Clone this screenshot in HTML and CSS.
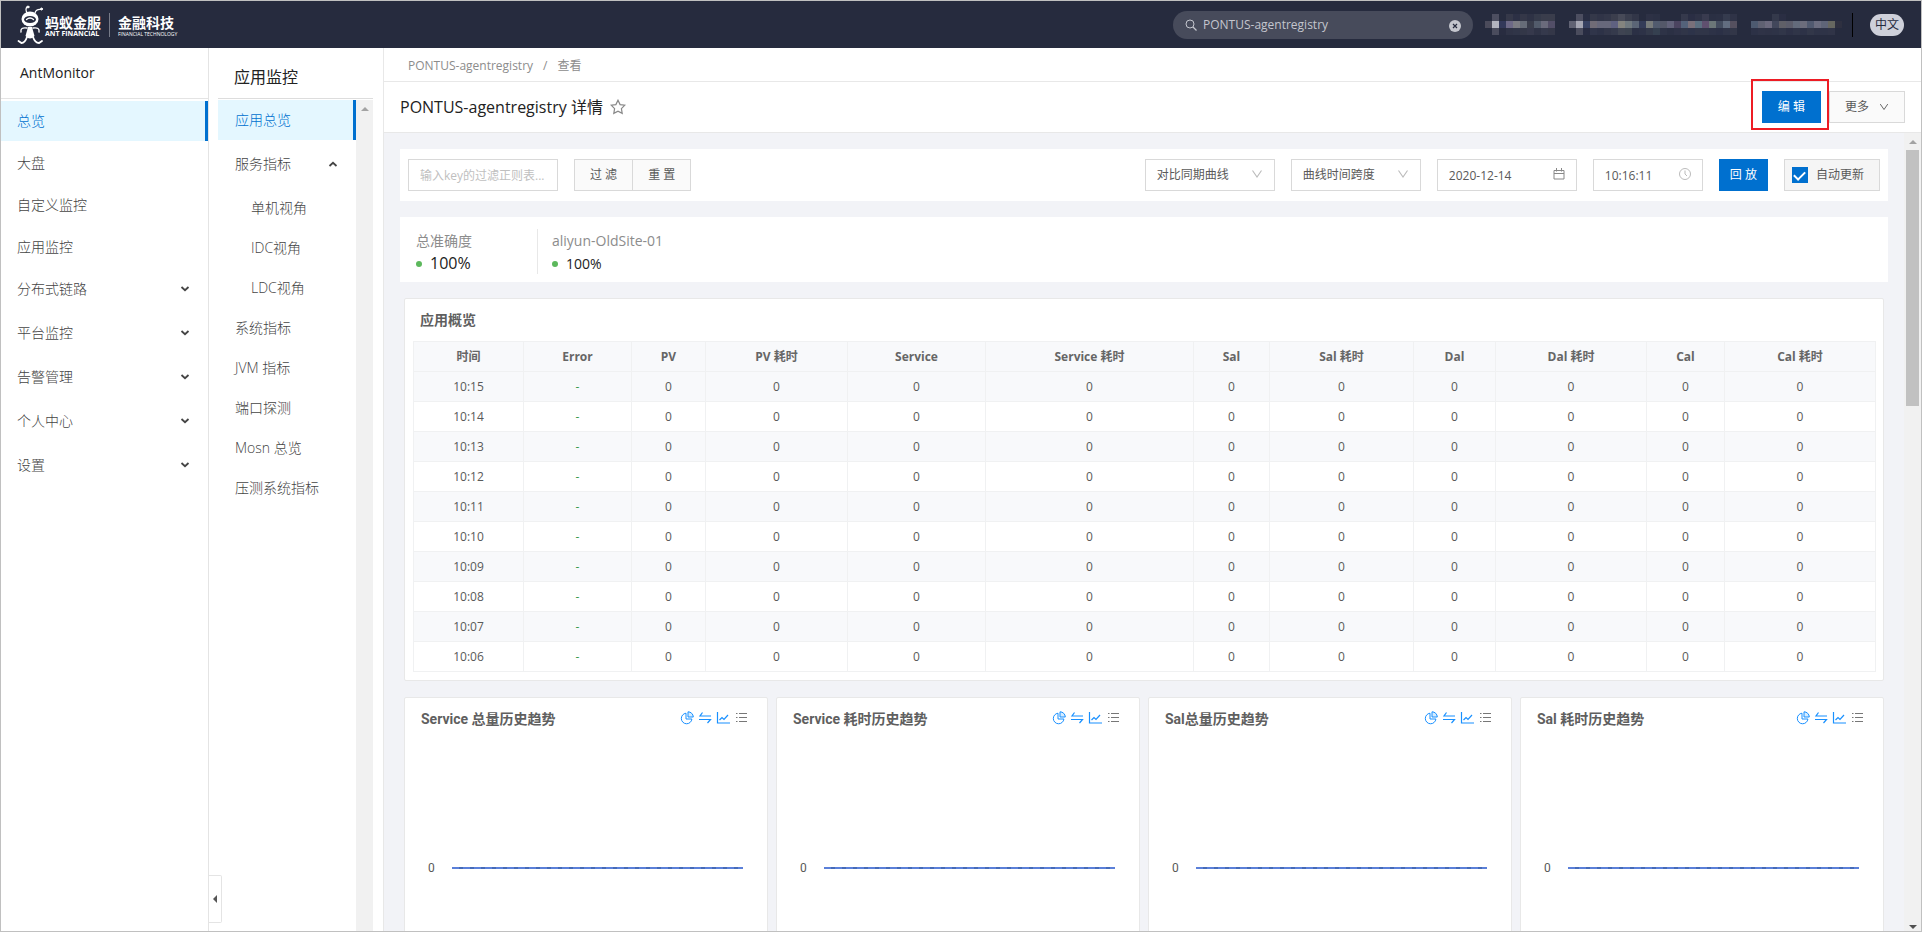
FILE: index.html
```html
<!DOCTYPE html>
<html lang="zh-CN">
<head>
<meta charset="UTF-8" />
<meta name="viewport" content="width=device-width, initial-scale=1" />
<title>AntMonitor</title>
<link rel="stylesheet" href="styles.css">
</head>
<body>

<svg class="sprite" aria-hidden="true">
  <symbol id="chevron" viewBox="0 0 12 12"><path d="M2.5 4 6 7.2 9.5 4" fill="none" stroke="currentColor" stroke-width="1.8"/></symbol>
  <symbol id="down" viewBox="0 0 12 12"><path d="M1.5 2.5 6 9 10.5 2.5" fill="none" stroke="currentColor" stroke-width="1.1"/></symbol>
  <symbol id="pie" viewBox="0 0 14 14"><g fill="none" stroke="currentColor"><path d="M6 2.2A5.3 5.3 0 1 0 11.9 8H6z"/><path d="M8 .8V6h5.3A5.3 5.3 0 0 0 8 .8z" fill="#d6ecff"/></g></symbol>
  <symbol id="swap" viewBox="0 0 14 14"><path d="M4.5 1.5 2 5h11M1 8.500h11.500L9.500 12" fill="none" stroke="currentColor" stroke-width="1.2"/></symbol>
  <symbol id="line" viewBox="0 0 14 14"><path d="M1.5 1v11H14M3.5 9 6 6.500l2 2 4-4.500" fill="none" stroke="currentColor" stroke-width="1.2"/></symbol>
  <symbol id="list" viewBox="0 0 14 14"><path d="M2 2.500h1.500M5 2.500h8M2 6.500h1.500M5 6.500h8M2 10.500h1.500M5 10.500h8" fill="none" stroke="currentColor" stroke-width="1.200"/></symbol>
</svg>

<header class="topbar">
  <a class="logo" href="#" aria-label="蚂蚁金服 金融科技">
    <svg class="ant" viewBox="0 0 28 40" fill="none" stroke="#fff" stroke-linecap="round">
      <path d="M10 8Q8 4 10 2M18 8Q19 4 24 4.5" stroke-width="1.2"/>
      <circle cx="11" cy="2" r="1" fill="#fff"/><circle cx="24.5" cy="4" r="1" fill="#fff"/>
      <ellipse cx="13" cy="14" rx="8.5" ry="7.5" fill="#fff" stroke="none"/>
      <ellipse cx="13" cy="14.5" rx="6" ry="3.5" fill="#262b3e" stroke="none"/>
      <path d="M9.5 14.5Q13 11.5 16.5 14.5" stroke-width="1.3"/>
      <path d="M10 23Q3 22 4 27M16 23Q23 22 22 27" stroke-width="1.4"/>
      <path d="M11 22h4l2.500 9q-4.500 5-9 0z" fill="#fff" stroke="none"/>
      <path d="M10 32Q8 38 4.500 38L1.500 36M16 32Q18 38 22 38L25 36" stroke-width="1.8"/>
    </svg>
    <span class="brand"><b>蚂蚁金服</b><small>ANT FINANCIAL</small></span>
    <span class="brand brand-sub"><b>金融科技</b><small>FINANCIAL TECHNOLOGY</small></span>
  </a>
  <div class="search">
    <svg viewBox="0 0 12 12"><path d="M8 8l3.5 3.5" stroke="currentColor" stroke-width="1.2"/><circle cx="5" cy="5" r="4" fill="none" stroke="currentColor"/></svg>
    <input type="text" value="PONTUS-agentregistry" aria-label="搜索">
    <button class="search-clear" aria-label="清除"><svg viewBox="0 0 12 12"><circle cx="6" cy="6" r="6" fill="currentColor"/><path d="M4 4l4 4M8 4l-4 4" stroke="#262b3e" stroke-width="1.2"/></svg></button>
  </div>
  <svg class="masked" id="masked" viewBox="0 0 357 21" aria-hidden="true"></svg>
  <button class="lang">中文</button>
</header>

<div class="layout">
  <aside class="sidebar">
    <h1>AntMonitor</h1>
    <nav class="menu">
      <a class="active" href="#">总览</a>
      <a href="#">大盘</a>
      <a href="#">自定义监控</a>
      <a href="#">应用监控</a>
      <a class="group" href="#">分布式链路<svg><use href="#chevron"/></svg></a>
      <a class="group" href="#">平台监控<svg><use href="#chevron"/></svg></a>
      <a class="group" href="#">告警管理<svg><use href="#chevron"/></svg></a>
      <a class="group" href="#">个人中心<svg><use href="#chevron"/></svg></a>
      <a class="group" href="#">设置<svg><use href="#chevron"/></svg></a>
    </nav>
  </aside>

  <aside class="subbar">
    <h2>应用监控</h2>
    <div class="subscroll">
      <nav class="submenu">
        <a class="active" href="#">应用总览</a>
        <a class="group open" href="#">服务指标<svg><use href="#chevron"/></svg></a>
        <a class="child" href="#">单机视角</a>
        <a class="child" href="#">IDC视角</a>
        <a class="child" href="#">LDC视角</a>
        <a href="#">系统指标</a>
        <a href="#">JVM 指标</a>
        <a href="#">端口探测</a>
        <a href="#">Mosn 总览</a>
        <a href="#">压测系统指标</a>
      </nav>
      <div class="track"><i class="arrow-up"></i></div>
    </div>
    <button class="collapse" aria-label="收起"><i></i></button>
  </aside>

  <main class="main">
    <nav class="breadcrumb"><a href="#">PONTUS-agentregistry</a><span>/</span><a href="#">查看</a></nav>
    <div class="titlebar">
      <h2>PONTUS-agentregistry 详情</h2>
      <svg class="star" viewBox="0 0 16 16"><path d="M8 1.2l2.1 4.4 4.700.6-3.400 3.400.8 4.800L8 12.100l-4.200 2.300.8-4.800L1.200 6.200l4.700-.6z" fill="none" stroke="currentColor" stroke-width="1.2"/></svg>
      <div class="actions">
        <span class="highlight"><button class="btn primary">编 辑</button></span>
        <button class="btn more">更多<svg><use href="#down"/></svg></button>
      </div>
    </div>

    <div class="body">
      <div class="content">
        <div class="toolbar">
          <input class="field filter" type="text" placeholder="输入key的过滤正则表..." aria-label="过滤">
          <div class="btn-group"><button class="btn">过 滤</button><button class="btn">重 置</button></div>
          <div class="control first">
            <select class="field" aria-label="对比同期曲线"><option>对比同期曲线</option></select>
            <svg><use href="#down"/></svg>
          </div>
          <div class="control">
            <select class="field" aria-label="曲线时间跨度"><option>曲线时间跨度</option></select>
            <svg><use href="#down"/></svg>
          </div>
          <div class="control date">
            <input class="field" type="text" value="2020-12-14" aria-label="日期">
            <svg viewBox="0 0 12 12"><path d="M1 2.5h10v8.500H1zM1 5.5h10M3.5 0v3.500M8.500 0v3.500" fill="none" stroke="#888"/></svg>
          </div>
          <div class="control time">
            <input class="field" type="text" value="10:16:11" aria-label="时间">
            <svg viewBox="0 0 12 12"><circle cx="6" cy="6" r="5.5" fill="none" stroke="currentColor"/><path d="M6 2.5V6l2 2" fill="none" stroke="currentColor"/></svg>
          </div>
          <button class="btn primary play">回 放</button>
          <label class="auto"><input type="checkbox" checked>自动更新</label>
        </div>

        <div class="accuracy">
          <div class="stat total"><span>总准确度</span><strong>100%</strong></div>
          <div class="stat"><span>aliyun-OldSite-01</span><strong>100%</strong></div>
        </div>

        <section class="panel">
          <h3>应用概览</h3>
          <table>
            <colgroup>
              <col class="w110"><col class="w108"><col class="w74"><col class="w142"><col class="w138"><col class="w208">
              <col class="w76"><col class="w144"><col class="w82"><col class="w151"><col class="w78"><col class="w151">
            </colgroup>
            <thead>
              <tr><th>时间</th><th>Error</th><th>PV</th><th>PV 耗时</th><th>Service</th><th>Service 耗时</th><th>Sal</th><th>Sal 耗时</th><th>Dal</th><th>Dal 耗时</th><th>Cal</th><th>Cal 耗时</th></tr>
            </thead>
            <tbody id="rows"></tbody>
          </table>
        </section>

        <div class="charts" id="charts"></div>
      </div>
      <div class="track"><i class="arrow-up"></i><div class="thumb"></div><i class="arrow-down"></i></div>
    </div>
  </main>
</div>

<script>
  // overview table, newest minute first
  const rows = document.getElementById('rows');
  for (let m = 15; m >= 6; m--) {
    const time = '10:' + String(m).padStart(2, '0');
    rows.innerHTML += '<tr><td>' + time + '</td><td class="ok">-</td>' + '<td>0</td>'.repeat(10) + '</tr>';
  }

  const charts = document.getElementById('charts');
  ['Service 总量历史趋势', 'Service 耗时历史趋势', 'Sal总量历史趋势', 'Sal 耗时历史趋势'].forEach(title => {
    const tools = ['pie', 'swap', 'line', 'list'].map(id =>
      `<button class="${id}" aria-label="${id}"><svg><use href="#${id}"/></svg></button>`).join('');
    charts.innerHTML += `
      <section class="chart">
        <header><h3>${title}</h3><div class="tools">${tools}</div></header>
        <div class="plot"><span>0</span><div class="series"></div></div>
      </section>`;
  });

  // account names are masked with 7px blocks: [first column, colours] per run
  const masks = [
    [[3, '353849 2c3045 343748 2e3245 353a4a 3a3d4c 3a3d4c'], [1, '4c4e60'],
     [13, '4c4e60 282d42 343849 303447 333749 3b3e4d 474a58 3a3e4e 323648'], [23, '2d3145 2b3044'],
     [28, '35394c 2a2e44 2e3246 393b4f 2a2f43 2b3044 353b4e 2f3347'], [41, '34394b 2a2e43']],
    [[0, '4b4b5b b3b4bf 33395a 6d6987 7b7c84 666c78 393d4c 525b6b 6a6b7c 524e67'],
     [12, '606273 a4a5b2 384262 706c77 67687b 67687b 5f6180 84847f 70797f 5b6576 343c58 777b7b 515b6e 545869 62627a 4b4460 54627a 79707a 5c6f80 60506f 6b7678 434c5f 626d80 55505f'],
     [38, '4d5a70 5f6172 6b697d 42475b 606068 5c5d6b 636b7b 6c6d7c 515a70 6b6d80 5f6578 666760 2e3040']],
    [[1, '4a4c5d 282c40 2f3346 303548 333748 36394c 2f3346 35394c 343748'],
     [13, '4a4c5d 282c42 30354a 2d3247 323649 353a4c 3f4452 3c4350 2b3045 2d3247 33394a 354050 2e3347 2b3044 2e3247 303548 2d3349 303548 303548 2d3247 2b3046 2f3448 323648'],
     [38, '2c3146 2f3347 2e3246 2e3347 313649 2d3146 303548 2d3247 323749 2e3347 2e3347 303447']]
  ];
  let cells = '';
  masks.forEach((runs, y) => runs.forEach(([start, colors]) => {
    colors.split(' ').forEach((c, i) => {
      cells += `<rect x="${(start + i) * 7}" y="${y * 7}" width="7" height="7" fill="#${c}"/>`;
    });
  }));
  document.getElementById('masked').innerHTML = cells;
</script>

</body>
</html>
```
FILE: styles.css
```css
* {
  box-sizing: border-box;
}
body {
  display: flex;
  flex-direction: column;
  height: 100vh;
  margin: 0;
  overflow: hidden;
  border: 1px solid #c0c0c0;
  font-family: "Open Sans", "Noto Sans CJK SC", sans-serif;
  font-size: 12px;
  line-height: 20px;
  color: #595959;
}
h1, h2, h3 {
  margin: 0;
  color: #222;
  font-weight: 400;
}
a {
  color: inherit;
  text-decoration: none;
}
button, input, select {
  margin: 0;
  padding: 0;
  font: inherit;
  color: inherit;
}
button {
  cursor: pointer;
}
svg {
  flex: none;
  width: 12px;
  height: 12px;
}
.sprite {
  display: none;
}

/* top bar */
.topbar {
  display: flex;
  flex: none;
  align-items: center;
  height: 47px;
  padding: 0 17px 0 16px;
  background: #262b3e;
}
.logo {
  display: flex;
  align-items: center;
  margin-right: auto;
  color: #fff;
}
.ant {
  width: 28px;
  height: 40px;
}
.brand {
  display: flex;
  flex-direction: column;
  padding-top: 2px;
}
.brand b {
  font-size: 14px;
  line-height: 16px;
}
.brand small {
  font-size: 7px;
  font-weight: 700;
  line-height: 6px;
}
.brand-sub {
  margin-left: 8px;
  padding-left: 8px;
  border-left: 1px solid #777b88;
}
.brand-sub small {
  font-size: 5px;
  font-weight: 400;
}
.search {
  display: flex;
  align-items: center;
  gap: 6px;
  width: 300px;
  height: 28px;
  padding: 0 12px;
  border-radius: 14px;
  background: #474b5b;
  color: #c4c6ce;
}
.search input {
  flex: 1;
  min-width: 0;
  border: 0;
  outline: 0;
  background: none;
}
.search-clear {
  display: flex;
  padding-top: 2px;
  border: 0;
  background: none;
}
.masked {
  width: 357px;
  height: 21px;
  margin: 0 10px 0 12px;
}
.lang {
  position: relative;
  width: 34px;
  height: 22px;
  margin-left: 18px;
  border: 0;
  border-radius: 11px;
  background: #ced0da;
  color: #262b3e;
}
.lang::before {
  content: "";
  position: absolute;
  top: -1px;
  left: -18px;
  width: 1px;
  height: 24px;
  background: #000;
}

.layout {
  display: flex;
  flex: 1;
  min-height: 0;
}

/* menus */
.sidebar {
  flex: none;
  width: 208px;
  border-right: 1px solid #e4e4e4;
}
.sidebar h1 {
  height: 51px;
  margin-bottom: 2px;
  padding-left: 19px;
  border-bottom: 1px solid #e4e4e4;
  font-size: 14px;
  font-weight: 500;
  line-height: 50px;
}
.menu, .submenu {
  display: flex;
  flex-direction: column;
  gap: 2px;
  color: #444;
  font-size: 14px;
  font-weight: 300;
}
.menu a, .submenu a {
  display: flex;
  align-items: center;
  justify-content: space-between;
  height: 40px;
  padding: 0 17px 0 16px;
}
.menu .group {
  margin-bottom: 2px;
}
.menu .active, .submenu .active {
  border-right: 3px solid #0070cf;
  background: #e4f7ff;
  color: #0070cf;
}
.subbar {
  position: relative;
  display: flex;
  flex-direction: column;
  flex: none;
  width: 175px;
  padding: 0 10px 0 9px;
  border-right: 1px solid #e8e8e8;
}
.subbar h2 {
  height: 51px;
  margin-bottom: 1px;
  padding-left: 16px;
  border-bottom: 1px solid #ddd;
  font-size: 16px;
  line-height: 58px;
}
.subscroll {
  display: flex;
  flex: 1;
}
.submenu {
  flex: 1;
  gap: 0;
}
.submenu a {
  padding-left: 17px;
}
.submenu .group {
  margin: 4px 0;
}
.submenu .child {
  padding-left: 33px;
}
.open svg {
  transform: rotate(180deg);
}
.track {
  position: relative;
  width: 17px;
  background: #f1f1f1;
}
.arrow-up, .arrow-down {
  position: absolute;
  left: 5px;
  border: 4px solid transparent;
}
.arrow-up {
  top: 3px;
  border-bottom-color: #a3a3a3;
}
.arrow-down {
  bottom: -2px;
  border-top-color: #505050;
}
.thumb {
  height: 256px;
  margin: 17px 2px 0;
  background: #c1c1c1;
}
.collapse {
  position: absolute;
  bottom: 8px;
  left: 0;
  width: 13px;
  height: 48px;
  border: 1px solid #e4e4e4;
  border-left: 0;
  border-radius: 0 2px 2px 0;
  background: #fff;
}
.collapse i {
  display: block;
  width: 0;
  border: 4px solid transparent;
  border-left: 0;
  border-right-color: #555;
  margin-left: 4px;
}

/* page head */
.main {
  display: flex;
  flex: 1;
  flex-direction: column;
  min-width: 0;
}
.breadcrumb {
  display: flex;
  gap: 10px;
  height: 34px;
  padding: 0 24px;
  border-bottom: 1px solid #e8e8e8;
  color: #8c8c8c;
  line-height: 36px;
}
.titlebar {
  display: flex;
  align-items: center;
  height: 51px;
  padding: 0 16px;
  border-bottom: 1px solid #e8e8e8;
}
.titlebar h2 {
  font-size: 16px;
}
.star {
  width: 16px;
  height: 16px;
  margin-left: 7px;
  color: #888;
}
.actions {
  display: flex;
  gap: 8px;
  margin-left: auto;
}
.highlight {
  position: relative;
}
/* call-out frame around the edit button */
.highlight::after {
  content: "";
  position: absolute;
  inset: -12px -8px -7px -11px;
  border: 2px solid #ed1c24;
  pointer-events: none;
}
.btn {
  height: 32px;
  padding: 0 15px;
  border: 1px solid #d9d9d9;
  background: #fafafa;
}
.primary {
  border-color: #0070cf;
  background: #0070cf;
  color: #fff;
}
.more {
  display: flex;
  align-items: center;
  gap: 10px;
}
.more svg {
  width: 10px;
}

/* scrolling content */
.body {
  display: flex;
  flex: 1;
  min-height: 0;
  background: #f2f3f7;
}
.content {
  flex: 1;
  min-width: 0;
  padding: 16px;
  overflow: hidden;
}
.toolbar {
  display: flex;
  align-items: center;
  gap: 16px;
  margin-bottom: 16px;
  padding: 10px 8px;
  background: #fff;
}
.field {
  width: 100%;
  height: 32px;
  padding: 0 11px;
  border: 1px solid #d9d9d9;
  border-radius: 0;
  background: #fff;
  appearance: none;
}
.filter {
  width: 150px;
}
.filter::placeholder {
  color: #bfbfbf;
}
.btn-group {
  display: flex;
}
.btn-group .btn + .btn {
  border-left: 0;
}
.control {
  position: relative;
  width: 130px;
}
.control svg {
  position: absolute;
  top: 9px;
  right: 12px;
  color: #bbb;
  pointer-events: none;
}
.first {
  margin-left: auto;
}
.date {
  width: 140px;
}
.time {
  width: 110px;
}
.play {
  padding: 0 10px;
}
.auto {
  display: flex;
  align-items: center;
  gap: 8px;
  height: 32px;
  padding: 0 15px 0 7px;
  border: 1px solid #d9d9d9;
  background: #f5f5f5;
}
.auto input {
  display: grid;
  place-items: center;
  width: 16px;
  height: 16px;
  background: #0070cf;
  appearance: none;
}
.auto input:checked::before {
  content: "";
  width: 9px;
  height: 5px;
  margin-bottom: 2px;
  border: solid #fff;
  border-width: 0 0 2px 2px;
  transform: rotate(-45deg);
}
.accuracy {
  display: flex;
  margin-bottom: 16px;
  padding: 12px 16px 8px;
  background: #fff;
}
.stat {
  display: flex;
  flex-direction: column;
  height: 45px;
  font-size: 14px;
  line-height: 23px;
  color: #8c8c8c;
}
.total {
  width: 122px;
  margin-right: 14px;
  border-right: 1px solid #e8e8e8;
}
.stat strong {
  display: flex;
  align-items: center;
  gap: 8px;
  color: #222;
  font-weight: 400;
}
.total strong {
  font-size: 16px;
}
.stat strong::before {
  content: "";
  width: 6px;
  height: 6px;
  border-radius: 50%;
  background: #5cb85c;
}
.panel, .chart {
  border: 1px solid #e8e8e8;
  border-radius: 2px;
  background: #fff;
}
.panel {
  margin: 0 4px 16px;
  padding: 0 8px 8px;
}
.panel h3, .chart h3 {
  color: #5f5f5f;
  font-size: 14px;
  font-weight: 700;
}
.panel h3 {
  padding-left: 7px;
  line-height: 42px;
}
table {
  width: 100%;
  table-layout: fixed;
  border-collapse: collapse;
}
th, td {
  height: 30px;
  padding: 0;
  border: 1px solid #f0f1f2;
  text-align: center;
}
th {
  color: #666;
}
th, tbody tr:nth-child(odd) {
  background: #f8f9fb;
}
.ok {
  color: #3c9a4e;
}
.w110 { width: 110px; }
.w108 { width: 108px; }
.w74 { width: 74px; }
.w142 { width: 142px; }
.w138 { width: 138px; }
.w208 { width: 208px; }
.w76 { width: 76px; }
.w144 { width: 144px; }
.w82 { width: 82px; }
.w151 { width: 151px; }
.w78 { width: 78px; }

/* trend charts */
.charts {
  display: grid;
  grid-template-columns: repeat(4, 1fr);
  gap: 8px;
  margin: 0 4px;
}
.chart {
  height: 300px;
}
.chart header {
  display: flex;
  align-items: center;
  justify-content: space-between;
  height: 42px;
  padding: 0 19px 0 16px;
}
.chart h3 {
  font-family: Roboto, "Noto Sans CJK SC", sans-serif;
}
.tools {
  display: flex;
  gap: 4px;
  padding-bottom: 2px;
  color: #1890ff;
}
.tools button {
  display: flex;
  border: 0;
  background: none;
}
.tools svg {
  width: 14px;
  height: 14px;
}
.tools .list {
  color: #777;
}
.plot {
  display: flex;
  align-items: center;
  gap: 17px;
  padding: 118px 24px 0 23px;
  font-family: Roboto, sans-serif;
}
.series {
  flex: 1;
  height: 2px;
  background: repeating-linear-gradient(90deg, #5b80d9 0 7px, #456bb8 7px 11px);
}
```
